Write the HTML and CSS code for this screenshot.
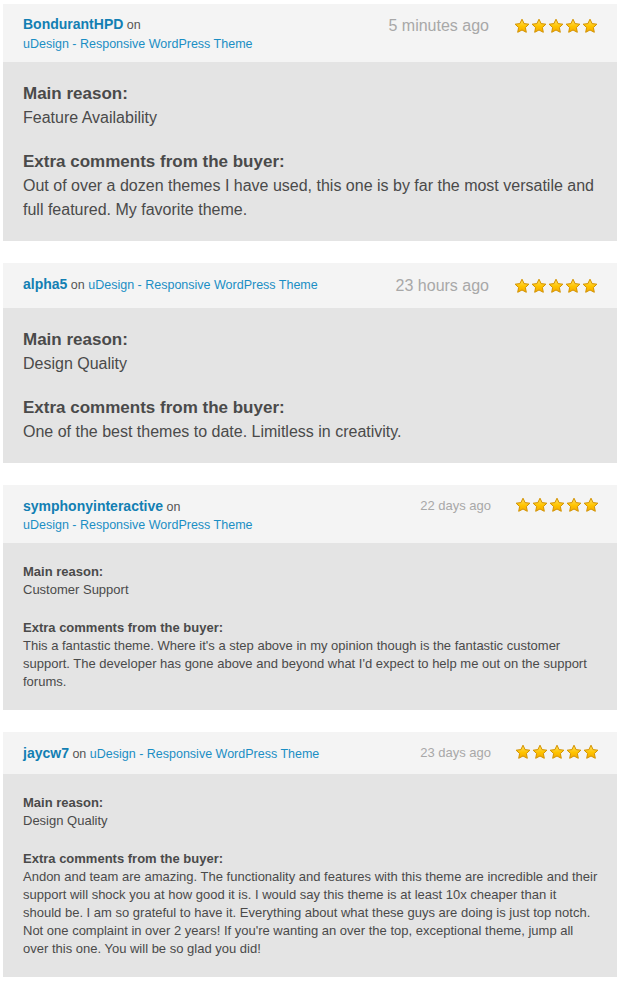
FILE: index.html
```html
<!DOCTYPE html>
<html>
<head>
<meta charset="utf-8">
<link rel="stylesheet" href="styles.css">
</head>
<body>
<svg width="0" height="0" class="defs">
  <defs>
    <linearGradient id="sg" x1="0" y1="0" x2="0" y2="1">
      <stop offset="0" stop-color="#ffe066"/>
      <stop offset="0.55" stop-color="#ffc400"/>
      <stop offset="1" stop-color="#f4a800"/>
    </linearGradient>
    <symbol id="star" viewBox="0 0 16 16">
      <path d="M8 1.2 L10.1 5.6 L14.9 6.2 L11.4 9.5 L12.3 14.3 L8 12 L3.7 14.3 L4.6 9.5 L1.1 6.2 L5.9 5.6 Z" fill="url(#sg)" stroke="#d39200" stroke-width="1" stroke-linejoin="round"/>
    </symbol>
  </defs>
</svg>

<div class="review large">
  <div class="head">
    <div class="who two">
      <div><a class="user">BondurantHPD</a> <span class="on">on</span></div>
      <div><a class="item">uDesign - Responsive WordPress Theme</a></div>
    </div>
    <div class="meta">
      <span class="time">5 minutes ago</span>
      <span class="stars"><svg><use href="#star"/></svg><svg><use href="#star"/></svg><svg><use href="#star"/></svg><svg><use href="#star"/></svg><svg><use href="#star"/></svg></span>
    </div>
  </div>
  <div class="body">
    <div class="label">Main reason:</div>
    <div class="text">Feature Availability</div>
    <div class="label gap">Extra comments from the buyer:</div>
    <div class="text">Out of over a dozen themes I have used, this one is by far the most versatile and full featured. My favorite theme.</div>
  </div>
</div>

<div class="review large">
  <div class="head one">
    <div class="who">
      <div><a class="user">alpha5</a> <span class="on">on</span> <a class="item">uDesign - Responsive WordPress Theme</a></div>
    </div>
    <div class="meta">
      <span class="time">23 hours ago</span>
      <span class="stars"><svg><use href="#star"/></svg><svg><use href="#star"/></svg><svg><use href="#star"/></svg><svg><use href="#star"/></svg><svg><use href="#star"/></svg></span>
    </div>
  </div>
  <div class="body">
    <div class="label">Main reason:</div>
    <div class="text">Design Quality</div>
    <div class="label gap">Extra comments from the buyer:</div>
    <div class="text">One of the best themes to date. Limitless in creativity.</div>
  </div>
</div>

<div class="review small">
  <div class="head">
    <div class="who two">
      <div><a class="user">symphonyinteractive</a> <span class="on">on</span></div>
      <div><a class="item">uDesign - Responsive WordPress Theme</a></div>
    </div>
    <div class="meta">
      <span class="time">22 days ago</span>
      <span class="stars"><svg><use href="#star"/></svg><svg><use href="#star"/></svg><svg><use href="#star"/></svg><svg><use href="#star"/></svg><svg><use href="#star"/></svg></span>
    </div>
  </div>
  <div class="body">
    <div class="label">Main reason:</div>
    <div class="text">Customer Support</div>
    <div class="label gap">Extra comments from the buyer:</div>
    <div class="text">This a fantastic theme. Where it's a step above in my opinion though is the fantastic customer support. The developer has gone above and beyond what I'd expect to help me out on the support forums.</div>
  </div>
</div>

<div class="review small">
  <div class="head one">
    <div class="who">
      <div><a class="user">jaycw7</a> <span class="on">on</span> <a class="item">uDesign - Responsive WordPress Theme</a></div>
    </div>
    <div class="meta">
      <span class="time">23 days ago</span>
      <span class="stars"><svg><use href="#star"/></svg><svg><use href="#star"/></svg><svg><use href="#star"/></svg><svg><use href="#star"/></svg><svg><use href="#star"/></svg></span>
    </div>
  </div>
  <div class="body">
    <div class="label">Main reason:</div>
    <div class="text">Design Quality</div>
    <div class="label gap">Extra comments from the buyer:</div>
    <div class="text">Andon and team are amazing. The functionality and features with this theme are incredible and their<br>support will shock you at how good it is. I would say this theme is at least 10x cheaper than it<br>should be. I am so grateful to have it. Everything about what these guys are doing is just top notch.<br>Not one complaint in over 2 years! If you're wanting an over the top, exceptional theme, jump all<br>over this one. You will be so glad you did!</div>
  </div>
</div>
</body>
</html>
```

FILE: styles.css
```css
html, body {
  margin: 0;
  background: #ffffff;
}
body {
  padding: 4px 1px 0 3px;
  font-family: "Liberation Sans", Arial, sans-serif;
  color: #4a4a4a;
}
.defs {
  position: absolute;
  width: 0;
  height: 0;
}
.review {
  margin-bottom: 22px;
}
.head {
  background: #f4f4f4;
  display: flex;
  justify-content: space-between;
  align-items: flex-start;
  padding: 11px 19px 8px 20px;
  font-size: 12.5px;
  line-height: 19px;
}
.head.one {
  padding-top: 12px;
  padding-bottom: 13px;
}
.user {
  color: #127fb3;
  font-weight: bold;
  font-size: 14px;
}
.on {
  color: #555;
}
.item {
  color: #1a8ec4;
}
.meta {
  display: flex;
  align-items: center;
  gap: 25px;
}
.time {
  color: #a8a8a8;
}
.stars {
  display: flex;
  gap: 1px;
}
.stars svg {
  width: 16px;
  height: 16px;
  display: block;
}
.body {
  background: #e4e4e4;
  padding: 20px 20px 19px 20px;
}
.label {
  font-weight: bold;
}
.gap {
  margin-top: 20px;
}
.large .time {
  font-size: 16px;
}
.large .meta {
  margin-top: 1px;
}
.large .body {
  font-size: 16px;
  line-height: 24px;
  padding-bottom: 19px;
}
.large .label {
  font-size: 17px;
}
.small .head {
  padding-top: 12px;
  padding-bottom: 9px;
  padding-right: 18px;
  line-height: 18px;
}
.small .head.one {
  padding-top: 12px;
  padding-bottom: 11px;
}
.small .time {
  font-size: 13px;
}
.small .stars {
  margin-top: -2px;
}
.small .meta {
  gap: 24px;
}
.small .body {
  font-size: 13px;
  line-height: 18px;
  padding-right: 14px;
  padding-bottom: 19px;
}
```
